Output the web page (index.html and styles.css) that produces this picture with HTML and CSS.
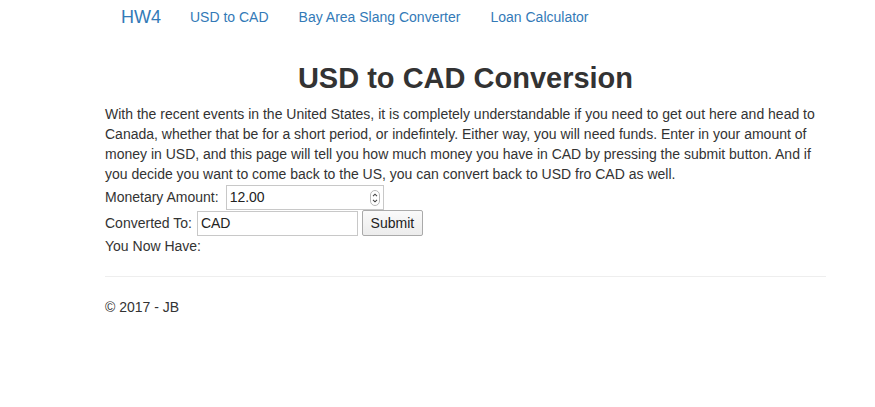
FILE: index.html
```html
<!DOCTYPE html>
<html lang="en">
<head>
<meta charset="utf-8">
<title>USD to CAD - HW4</title>
<link rel="stylesheet" href="styles.css">
</head>
<body>
<div class="page">
  <nav class="navbar">
    <a class="brand" href="#">HW4</a>
    <a class="nav-link" href="#">USD to CAD</a>
    <a class="nav-link" href="#">Bay Area Slang Converter</a>
    <a class="nav-link" href="#">Loan Calculator</a>
  </nav>
  <main class="content">
    <h2 class="title">USD to CAD Conversion</h2>
    <p class="intro">With the recent events in the United States, it is completely understandable if you need to get out here and head to Canada, whether that be for a short period, or indefintely. Either way, you will need funds. Enter in your amount of money in USD, and this page will tell you how much money you have in CAD by pressing the submit button. And if you decide you want to come back to the US, you can convert back to USD fro CAD as well.</p>
    <form class="convert-form">
      <div class="row">
        <label class="label label-amount" for="amount">Monetary Amount:</label>
        <span class="num-wrap">
          <input class="field field-num" id="amount" type="text" value="12.00">
          <svg class="spinner" width="10" height="16" viewBox="0 0 10 16">
            <rect x="0.5" y="0.5" width="9" height="15" rx="4.5" fill="#fff" stroke="#b9b9b9"/>
            <path d="M3 6.2 L5 4.2 L7 6.2" fill="none" stroke="#444" stroke-width="1.1"/>
            <path d="M3 9.8 L5 11.8 L7 9.8" fill="none" stroke="#444" stroke-width="1.1"/>
          </svg>
        </span>
      </div>
      <div class="row">
        <label class="label label-to" for="currency">Converted To:</label>
        <input class="field field-text" id="currency" type="text" value="CAD">
        <button class="submit" type="button">Submit</button>
      </div>
      <div class="result">You Now Have:</div>
    </form>
    <hr class="divider">
    <footer class="footer">
      <p>&copy; 2017 - JB</p>
    </footer>
  </main>
</div>
</body>
</html>
```

FILE: styles.css
```css
html, body {
  margin: 0;
  padding: 0;
  background: #fff;
}

body {
  font-family: "Liberation Sans", Arial, sans-serif;
  font-size: 14px;
  line-height: 20px;
  color: #333;
}

.page {
  width: 721px;
  margin-left: 105px;
}

.navbar {
  display: flex;
  align-items: center;
  height: 34px;
}

.navbar a {
  color: #337ab7;
  text-decoration: none;
}

.brand {
  font-size: 18px;
  line-height: 20px;
  padding: 0 14px 0 16px;
}

.nav-link {
  font-size: 14px;
  line-height: 20px;
  padding: 0 15px;
}

.content {
  padding-top: 28px;
}

.title {
  margin: 0 0 9px;
  font-size: 29px;
  line-height: 33px;
  font-weight: bold;
  text-align: center;
  color: #333;
}

.intro {
  margin: 0;
  width: 724px;
}

.convert-form {
  margin: 0;
}

.row {
  display: flex;
  align-items: center;
  height: 26px;
}

.label-amount {
  margin-right: 7px;
}

.label-to {
  margin-right: 5px;
}

.num-wrap {
  position: relative;
  display: inline-block;
}

.field {
  box-sizing: border-box;
  height: 25px;
  border: 1px solid #c8c8c8;
  padding: 0 3px;
  font-family: "Liberation Sans", Arial, sans-serif;
  font-size: 14px;
  color: #222;
  background: #fff;
  outline: none;
}

.field-num {
  width: 158px;
  display: block;
}

.spinner {
  position: absolute;
  right: 4px;
  top: 5px;
}

.field-text {
  width: 161px;
}

.submit {
  box-sizing: border-box;
  margin-left: 4px;
  width: 61px;
  height: 26px;
  border: 1px solid #aaa;
  border-radius: 2px;
  background: linear-gradient(#fafafa, #ececec);
  font-family: "Liberation Sans", Arial, sans-serif;
  font-size: 14px;
  color: #222;
  padding: 0;
}

.result {
  line-height: 20px;
}

.divider {
  margin: 20px 0 20px;
  border: 0;
  border-top: 1px solid #eee;
  height: 0;
}

.footer p {
  margin: 0;
}
```
